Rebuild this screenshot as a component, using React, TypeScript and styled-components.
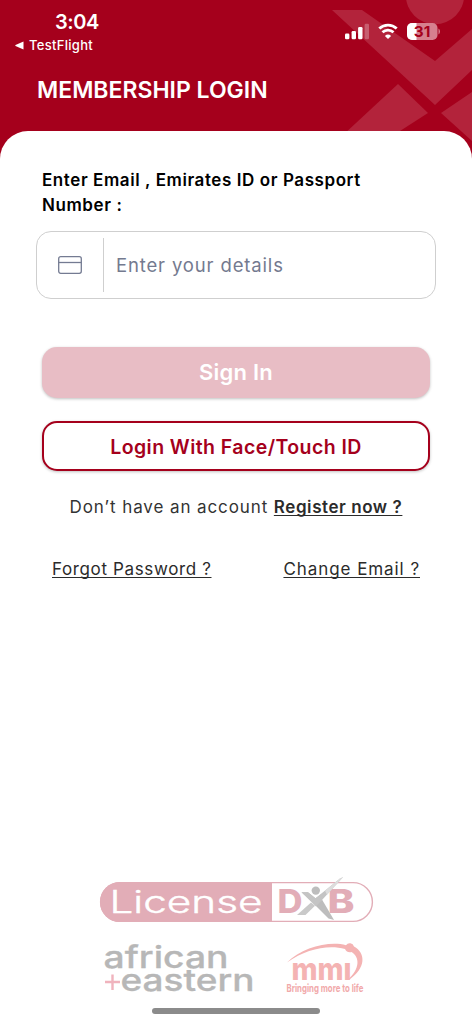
import React from "react";
import styled, { createGlobalStyle } from "styled-components";

const RED = "#a5001c";

const GlobalStyle = createGlobalStyle`
  *, *::before, *::after { box-sizing: border-box; }
  body { margin: 0; background: #fff; font-family: Inter, "Liberation Sans", sans-serif; }
  button, input { font-family: inherit; }
`;

const Screen = styled.div`
  width: 472px;
  height: 1024px;
  overflow: hidden;
  display: flex;
  flex-direction: column;
  background: #fff;
`;

const Header = styled.header`
  position: relative;
  flex: none;
  height: 165px;
  padding-top: 10px;
  background: ${RED};
  color: #fff;
`;

const Watermark = styled.svg`
  position: absolute;
  top: 0;
  right: 0;
`;

const StatusBar = styled.div`
  position: relative;
  display: flex;
  justify-content: space-between;
  height: 46px;
  padding: 0 32px 0 15px;
`;

const Clock = styled.div`
  padding-left: 40px;
  font-size: 20px;
  font-weight: 600;
  line-height: 25px;
  letter-spacing: -0.4px;
`;

const BackLink = styled.div`
  display: flex;
  align-items: center;
  gap: 5px;
  font-size: 13px;
  font-weight: 500;
  line-height: 21px;
  letter-spacing: 0.3px;
`;

const StatusIcons = styled.svg`
  margin-top: 12px;
`;

const Title = styled.h1`
  position: relative;
  margin: 19px 0 0 37px;
  font-size: 23px;
  font-weight: 600;
  line-height: 31px;
  letter-spacing: 0;
  white-space: nowrap;
`;

const Sheet = styled.main`
  position: relative;
  flex: 1;
  display: flex;
  flex-direction: column;
  margin-top: -34px;
  padding-top: 37px;
  border-radius: 28px 28px 0 0;
  background: #fff;
`;

const Label = styled.label`
  margin-left: 42px;
  color: #000;
  font-size: 17px;
  font-weight: 600;
  line-height: 25px;
  letter-spacing: 0.58px;
  white-space: nowrap;
`;

const Field = styled.div`
  display: flex;
  align-items: center;
  width: 400px;
  height: 68px;
  margin: 13px 0 0 36px;
  border: 1.5px solid #cfcfcf;
  border-radius: 15px;
`;

const FieldIcon = styled.div`
  display: flex;
  align-items: center;
  justify-content: center;
  width: 67px;
  height: 54px;
  border-right: 1px solid #cfcfcf;
`;

const Input = styled.input`
  flex: 1;
  min-width: 0;
  height: 54px;
  padding: 0 12px;
  border: 0;
  outline: 0;
  background: transparent;
  font-size: 18.5px;
  letter-spacing: 0.85px;
  &::placeholder { color: #747a8f; opacity: 1; }
`;

const Button = styled.button<{ $outlined?: boolean }>`
  width: 388px;
  height: ${(p) => (p.$outlined ? 50 : 51)}px;
  margin: ${(p) => (p.$outlined ? 23 : 48)}px 0 0 42px;
  padding: ${(p) => (p.$outlined ? "1px 0 0" : "0 0 1px")};
  border: ${(p) => (p.$outlined ? `2.5px solid ${RED}` : "0")};
  border-radius: 15px;
  background: ${(p) => (p.$outlined ? "#fff" : "#e8bdc5")};
  box-shadow: 0 1px 3px rgba(0, 0, 0, 0.25);
  color: ${(p) => (p.$outlined ? RED : "#fff")};
  font-size: ${(p) => (p.$outlined ? 19.5 : 22)}px;
  font-weight: 600;
  letter-spacing: ${(p) => (p.$outlined ? 0.43 : 0.25)}px;
`;

const RegisterLine = styled.p`
  margin: 23px 0 0;
  color: #333;
  font-size: 17px;
  line-height: 26px;
  letter-spacing: 0.9px;
  text-align: center;
  white-space: nowrap;
`;

const Link = styled.a<{ $strong?: boolean; $tracking: number }>`
  color: #2b2b2b;
  font-weight: ${(p) => (p.$strong ? 600 : 400)};
  letter-spacing: ${(p) => p.$tracking}px;
  text-decoration: underline;
  text-decoration-thickness: 1px;
  text-underline-offset: 2px;
  text-decoration-skip-ink: none;
`;

const LinkRow = styled.nav`
  display: flex;
  justify-content: space-between;
  margin-top: 36px;
  padding: 0 52px;
  font-size: 17px;
  line-height: 26px;
`;

const Footer = styled.footer`
  display: flex;
  flex-direction: column;
  align-items: center;
  margin-top: auto;
  padding-bottom: 10px;
`;

const Partners = styled.svg`
  margin-bottom: 11px;
  overflow: visible;
`;

const HomeIndicator = styled.div`
  width: 168px;
  height: 6px;
  border-radius: 3px;
  background: #8b8b8b;
`;

function StatusGlyphs() {
  return (
    <StatusIcons width="96" height="20" viewBox="344 22 96 20">
      <g fill="#fff">
        <rect x="345" y="33.5" width="4.4" height="5.8" rx="1.3" />
        <rect x="351.6" y="31" width="4.4" height="8.3" rx="1.3" />
        <rect x="358.1" y="27" width="4.4" height="12.3" rx="1.3" />
        <rect x="364.6" y="23.8" width="4.4" height="15.5" rx="1.3" opacity="0.27" />
        <path d="M388 39 L384.9 35.9 A4.6 4.6 0 0 1 391.1 35.9Z" />
      </g>
      <path d="M379.300 29.200A12.600 12.600 0 0 1 396.700 29.200M382.500 32.900A7.900 7.900 0 0 1 393.500 32.900" transform="translate(0 -.6)" fill="none" stroke="#fff" strokeWidth="2.800" />
      <clipPath id="cell"><rect x="407" y="23" width="30.500" height="17" rx="5" /></clipPath>
      <g clipPath="url(#cell)">
        <rect x="407" y="23" width="31" height="17" fill="#d6808e" />
        <rect x="407" y="23" width="9.500" height="17" fill="#fff" />
      </g>
      <path d="M438.500 28.600q1.500.9 1.500 2.900t-1.500 2.900z" fill="#d6808e" />
      <text x="413.800" y="37" fontSize="15" fontWeight="700" fill={RED} textLength="16.500" lengthAdjust="spacingAndGlyphs">31</text>
    </StatusIcons>
  );
}

function PartnerLogos() {
  return (
    <Partners width="276" height="122" viewBox="98 875 276 122">
      <rect x="100.600" y="882.600" width="271.800" height="38.800" rx="19.400" fill="#fff" stroke="#e2adb7" strokeWidth="1.400" />
      <path d="M272 882H120a20 20 0 0 0 0 40H272z" fill="#e2adb7" />
      <text x="109.500" y="913" fontSize="31" fontWeight="300" fill="#fff" stroke="#fff" strokeWidth="0.400" textLength="153" lengthAdjust="spacingAndGlyphs">License</text>
      <g fontSize="32" fontWeight="800" fill="#e2adb7">
        <text x="277.500" y="913.300" textLength="25" lengthAdjust="spacingAndGlyphs">D</text>
        <text x="327.500" y="913.300" textLength="27" lengthAdjust="spacingAndGlyphs">B</text>
      </g>
      <g fill="#bdbdbd">
        <circle cx="315.800" cy="890.600" r="4.200" />
        <path d="M301.500 892.300h6.500l7.500 6 10-7-10.200 13.500z" />
        <path d="M318 903l4-3.500 12 20.500-5.500-1.500-13-13z" />
      </g>
      <path d="M311 902.500l4 3.200-9.500 9.300h-8.500z" fill="#c9c9c9" />
      <path d="M301.500 892.300h6.500l7.500 6L340 878.500l3.200-1.400L316 906.500z" fill="#c4c4c4" />
      <path d="M325 890.700 340 878.500 343.200 877.100 327 894.700z" fill="#dddddd" />

      <g fontFamily="Inter" fontWeight="500" fill="#b7b7b7" stroke="#b7b7b7" strokeWidth="0.300">
        <text x="103.500" y="967.500" fontSize="30.500" textLength="125" lengthAdjust="spacingAndGlyphs">african</text>
        <text x="120.500" y="991" fontSize="30.500" textLength="134" lengthAdjust="spacingAndGlyphs">eastern</text>
      </g>
      <path d="M105 982h15M112.500 974.500v15.500" stroke="#f0b3bd" strokeWidth="2.400" />

      <g fill="#f4b3b3">
        <path d="M287 962.500C302 947 330 940.500 346 945.200A4.500 4.500 0 0 1 354 946.500C366 953 366 968 349.500 979.500L348 979.500C360 969 360 957 351.500 952Q347 953 345 949C328 944.500 306 949 287 962.500Z" />
        <text x="291.500" y="979.500" fontSize="31" fontWeight="800" textLength="60" lengthAdjust="spacingAndGlyphs">mmı</text>
      </g>
      <text x="286.500" y="991.500" fontSize="11" fontWeight="700" fill="#f1a9aa" textLength="77" lengthAdjust="spacingAndGlyphs">Bringing more to life</text>
    </Partners>
  );
}

export default function App() {
  return (
    <Screen>
      <GlobalStyle />
      <Header>
        <Watermark width="140" height="165" viewBox="332 0 140 165" fill="#b3233b">
          <circle cx="435" cy="-5" r="29.200" />
          <path d="M332 10h30l73 51 37-32v41l-37 35z" />
          <path d="M398 84l30 29-28 18-30 18h-42z" />
          <path d="M441 113l31-21v49z" />
        </Watermark>
        <StatusBar>
          <div>
            <Clock>3:04</Clock>
            <BackLink>
              <svg width="9" height="9" viewBox="0 0 9 9"><path d="M8.500.5v8L.5 5Q0 4.500.5 4z" fill="#fff" /></svg>
              TestFlight
            </BackLink>
          </div>
          <StatusGlyphs />
        </StatusBar>
        <Title>MEMBERSHIP LOGIN</Title>
      </Header>
      <Sheet>
        <Label htmlFor="details">
          Enter Email , Emirates ID or Passport
          <br />
          Number :
        </Label>
        <Field>
          <FieldIcon>
            <svg width="24" height="18" viewBox="0 0 24 18" fill="none" stroke="#747b92" strokeWidth="1.300">
              <rect x="0.700" y="0.700" width="22.600" height="16.600" rx="2" />
              <path d="M.7 6.500h22.600" />
            </svg>
          </FieldIcon>
          <Input id="details" placeholder="Enter your details" />
        </Field>
        <Button>Sign In</Button>
        <Button $outlined>Login With Face/Touch ID</Button>
        <RegisterLine>
          Don’t have an account <Link $strong $tracking={0.57}>Register now ?</Link>
        </RegisterLine>
        <LinkRow>
          <Link $tracking={0.63}>Forgot Password ?</Link>
          <Link $tracking={0.93}>Change Email ?</Link>
        </LinkRow>
        <Footer>
          <PartnerLogos />
          <HomeIndicator />
        </Footer>
      </Sheet>
    </Screen>
  );
}
